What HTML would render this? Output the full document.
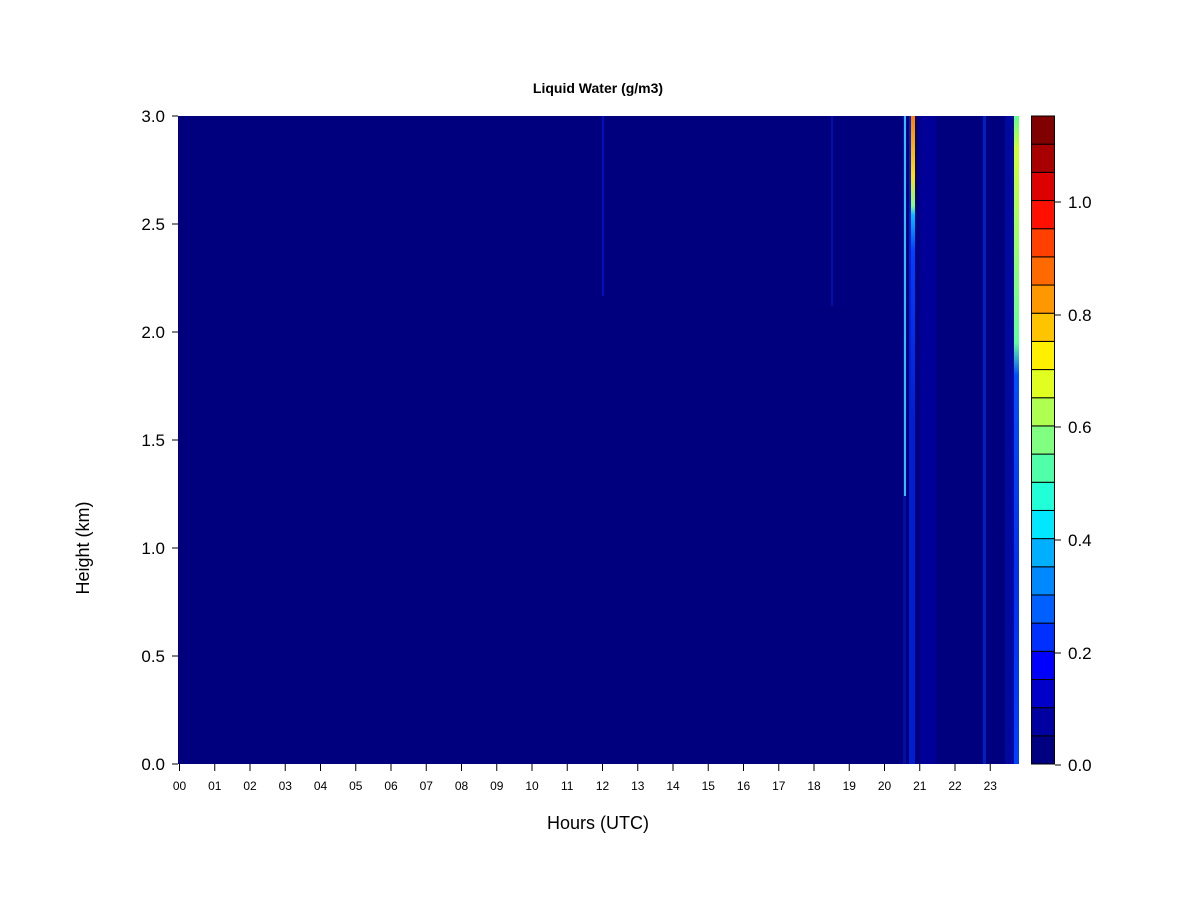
<!DOCTYPE html><html><head><style>body{margin:0;background:#fff}svg{display:block}text{font-family:"Liberation Sans",Arial,sans-serif;fill:#000}</style></head><body>
<svg width="1200" height="900" viewBox="0 0 1200 900">
<defs>
<linearGradient id="s1" x1="0" y1="0" x2="0" y2="1"><stop offset="0" stop-color="#ff8000"/><stop offset="0.2" stop-color="#ffe000"/><stop offset="0.3" stop-color="#80ff80"/><stop offset="0.33" stop-color="#00c0ff"/><stop offset="0.45" stop-color="#0040ff"/><stop offset="1" stop-color="#0020d0"/></linearGradient>
<linearGradient id="s2" x1="0" y1="0" x2="0" y2="1"><stop offset="0" stop-color="#60ff90"/><stop offset="0.05" stop-color="#d0ff30"/><stop offset="0.35" stop-color="#60ffa0"/><stop offset="0.4" stop-color="#0050ff"/><stop offset="0.7" stop-color="#0030f0"/><stop offset="1" stop-color="#0040ff"/></linearGradient>
</defs>
<rect x="1030" y="-2" width="26" height="2" fill="#000"/>
<text x="598" y="93" font-size="14" font-weight="bold" text-anchor="middle">Liquid Water (g/m3)</text>
<rect x="178" y="116" width="841" height="648" fill="#00007f"/>
<rect x="602" y="116" width="2" height="180" fill="#0010c0"/>
<rect x="831" y="116" width="2" height="190" fill="#0010b0"/>
<rect x="903" y="116" width="3" height="648" fill="#0010a0"/>
<rect x="904" y="116" width="2" height="380" fill="#30c0ff"/>
<rect x="909" y="116" width="6" height="648" fill="#0020d0"/>
<rect x="911" y="116" width="4" height="300" fill="url(#s1)"/>
<rect x="920" y="116" width="16" height="648" fill="#000098"/>
<rect x="983" y="116" width="3" height="648" fill="#0020c0"/>
<rect x="1005" y="116" width="14" height="648" fill="#0008a0"/>
<rect x="1014" y="116" width="5" height="648" fill="url(#s2)"/>
<g stroke="#000" stroke-width="1">
<line x1="172" y1="116" x2="178" y2="116"/><line x1="172" y1="224" x2="178" y2="224"/><line x1="172" y1="332" x2="178" y2="332"/><line x1="172" y1="440" x2="178" y2="440"/><line x1="172" y1="548" x2="178" y2="548"/><line x1="172" y1="656" x2="178" y2="656"/><line x1="172" y1="764" x2="178" y2="764"/>
</g>
<g font-size="17" text-anchor="end">
<text x="165" y="122">3.0</text><text x="165" y="230">2.5</text><text x="165" y="338">2.0</text><text x="165" y="446">1.5</text><text x="165" y="554">1.0</text><text x="165" y="662">0.5</text><text x="165" y="770">0.0</text>
</g>
<text transform="translate(89,548) rotate(-90)" font-size="18" text-anchor="middle">Height (km)</text>
<text x="598" y="829" font-size="18" text-anchor="middle">Hours (UTC)</text>
<g id="xt" stroke="#000"></g>
<g id="xl" font-size="12" text-anchor="middle"></g>
<g id="cb"></g>
<g stroke="#000"><line x1="1055" y1="202" x2="1061" y2="202"/><line x1="1055" y1="315" x2="1061" y2="315"/><line x1="1055" y1="427" x2="1061" y2="427"/><line x1="1055" y1="540" x2="1061" y2="540"/><line x1="1055" y1="653" x2="1061" y2="653"/><line x1="1055" y1="765" x2="1061" y2="765"/></g>
<g font-size="17"><text x="1068" y="208">1.0</text><text x="1068" y="321">0.8</text><text x="1068" y="433">0.6</text><text x="1068" y="546">0.4</text><text x="1068" y="659">0.2</text><text x="1068" y="771">0.0</text></g>
</svg>
<script>
var ns="http://www.w3.org/2000/svg",xt=document.getElementById('xt'),xl=document.getElementById('xl'),cb=document.getElementById('cb');
for(var i=0;i<24;i++){var x=179.5+i*35.25;var l=document.createElementNS(ns,'line');l.setAttribute('x1',x);l.setAttribute('x2',x);l.setAttribute('y1',764);l.setAttribute('y2',771);xt.appendChild(l);var t=document.createElementNS(ns,'text');t.setAttribute('x',x);t.setAttribute('y',790);t.textContent=(i<10?'0':'')+i;xl.appendChild(t);}
var c=["#000080","#0000a0","#0000c8","#0000ff","#0030ff","#0060ff","#0088ff","#00b0ff","#00e8ff","#20ffd8","#50ffa8","#80ff80","#b0ff50","#e0ff20","#fff000","#ffc400","#ff9800","#ff6a00","#ff4000","#ff1000","#dd0000","#a80000","#800000"];
var h=648/23;for(var k=0;k<23;k++){var r=document.createElementNS(ns,'rect');var y=764-(k+1)*h;r.setAttribute('x',1031.5);r.setAttribute('y',y);r.setAttribute('width',23);r.setAttribute('height',h);r.setAttribute('fill',c[k]);r.setAttribute('stroke','#000');r.setAttribute('stroke-width','1');cb.appendChild(r);}
</script>
</body></html>
